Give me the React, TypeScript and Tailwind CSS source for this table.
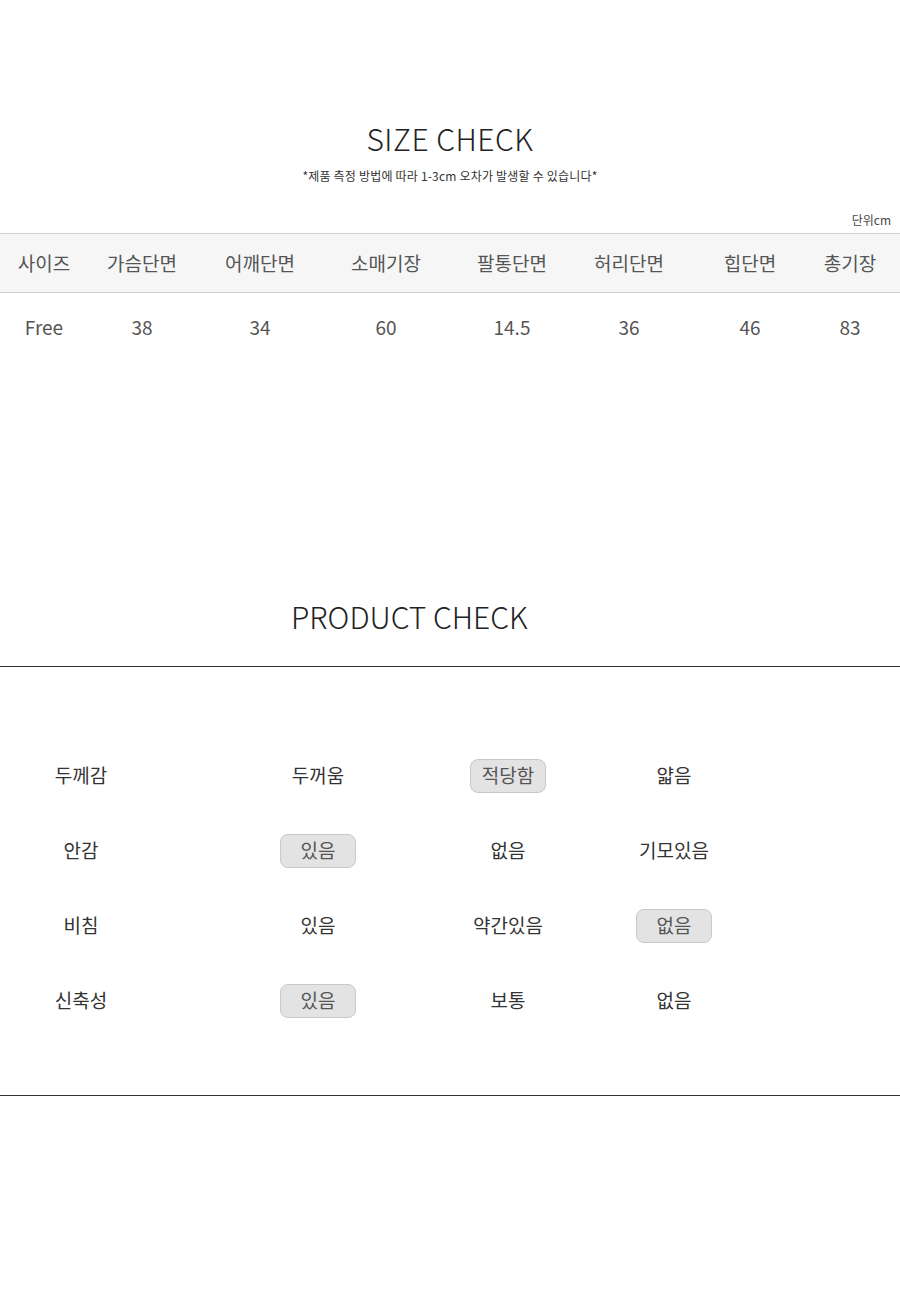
import React from 'react';

const font = { fontFamily: '"Noto Sans CJK KR", "Noto Sans", sans-serif' };

// size table
const sizeHeaders = ['사이즈', '가슴단면', '어깨단면', '소매기장', '팔통단면', '허리단면', '힙단면', '총기장'];
const sizeValues = ['Free', '38', '34', '60', '14.5', '36', '46', '83'];

// product check rows: label, options, index of the selected one
const checkRows: { label: string; options: string[]; selected: number }[] = [
  { label: '두께감', options: ['두꺼움', '적당함', '얇음'], selected: 1 },
  { label: '안감', options: ['있음', '없음', '기모있음'], selected: 0 },
  { label: '비침', options: ['있음', '약간있음', '없음'], selected: 2 },
  { label: '신축성', options: ['있음', '보통', '없음'], selected: 0 },
];

const optionCols = ['ml-[86px]', 'ml-[50px]', 'ml-[26px]'];

function Option({ text, active, className }: { text: string; active: boolean; className: string }) {
  return (
    <div className={`w-[140px] flex justify-center ${className}`}>
      {active ? (
        <span className="w-[76px] h-[34px] flex items-center justify-center rounded-[8px] bg-[#e3e3e3] border border-[#c8c8c8] text-[19px] text-[#555]">
          {text}
        </span>
      ) : (
        <span className="text-[19px] text-[#333]">{text}</span>
      )}
    </div>
  );
}

export default function App() {
  return (
    <div className="w-[900px] min-h-[1300px] bg-white" style={font}>
      {/* SIZE CHECK */}
      <div className="pt-[120px] flex flex-col items-center">
        <h2 className="text-[30px] leading-[36px] font-light text-[#222] tracking-[0.5px]">SIZE CHECK</h2>
        <p className="mt-[11px] text-[12px] leading-[18px] text-[#333] tracking-[0.2px]">*제품 측정 방법에 따라 1-3cm 오차가 발생할 수 있습니다*</p>
      </div>
      <div className="mt-[26px] pr-[9px] text-right text-[12px] leading-[18px] text-[#444]">단위cm</div>

      <div className="mt-[4px] border-t border-b border-[#cfcfcf] bg-[#f6f6f6] grid grid-cols-[88px_108px_128px_124px_128px_106px_136px_64px] h-[60px] items-center">
        {sizeHeaders.map((h) => (
          <div key={h} className="text-center text-[19px] text-[#555]">{h}</div>
        ))}
      </div>
      <div className="grid grid-cols-[88px_108px_128px_124px_128px_106px_136px_64px] h-[68px] items-center">
        {sizeValues.map((v, i) => (
          <div key={i} className="text-center text-[19px] text-[#555]">{v}</div>
        ))}
      </div>

      {/* PRODUCT CHECK */}
      <div className="mt-[237px] pl-[291px]">
        <h2 className="text-[30px] leading-[36px] font-light text-[#222]">PRODUCT CHECK</h2>
      </div>
      <div className="mt-[32px] border-t border-[#333]" />
      <div className="pt-[71px] pb-[57px] border-b border-[#333]">
        {checkRows.map((row) => (
          <div key={row.label} className="flex items-center h-[75px]">
            <div className="w-[162px] text-center text-[19px] text-[#333]">{row.label}</div>
            {row.options.map((o, i) => (
              <Option key={o + i} text={o} active={i === row.selected} className={optionCols[i]} />
            ))}
          </div>
        ))}
      </div>
    </div>
  );
}
